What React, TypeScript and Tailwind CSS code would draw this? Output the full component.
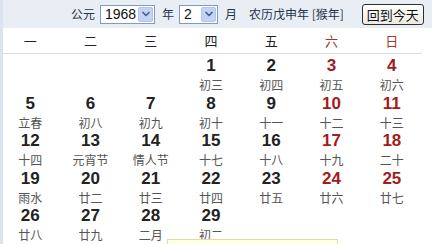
import { ChevronDown } from 'lucide-react'

type Day = { d: number; lunar: string }

const weekdays = ['一', '二', '三', '四', '五', '六', '日']

const days: (Day | null)[] = [
  null, null, null,
  { d: 1, lunar: '初三' }, { d: 2, lunar: '初四' }, { d: 3, lunar: '初五' }, { d: 4, lunar: '初六' },
  { d: 5, lunar: '立春' }, { d: 6, lunar: '初八' }, { d: 7, lunar: '初九' }, { d: 8, lunar: '初十' },
  { d: 9, lunar: '十一' }, { d: 10, lunar: '十二' }, { d: 11, lunar: '十三' },
  { d: 12, lunar: '十四' }, { d: 13, lunar: '元宵节' }, { d: 14, lunar: '情人节' }, { d: 15, lunar: '十七' },
  { d: 16, lunar: '十八' }, { d: 17, lunar: '十九' }, { d: 18, lunar: '二十' },
  { d: 19, lunar: '雨水' }, { d: 20, lunar: '廿二' }, { d: 21, lunar: '廿三' }, { d: 22, lunar: '廿四' },
  { d: 23, lunar: '廿五' }, { d: 24, lunar: '廿六' }, { d: 25, lunar: '廿七' },
  { d: 26, lunar: '廿八' }, { d: 27, lunar: '廿九' }, { d: 28, lunar: '二月' }, { d: 29, lunar: '初二' },
]

function FakeSelect({ value, width }: { value: string; width: string }) {
  return (
    <div className={`flex shrink-0 items-center h-[19px] border border-[#7f9db9] bg-white ${width}`}>
      <span className="flex-1 pl-[4px] text-[14px] leading-none text-[#111] font-['Liberation_Sans',Arial,sans-serif]">{value}</span>
      <span className="flex items-center justify-center w-[15px] h-[15px] mr-[1px] rounded-[2px] bg-[#c3d3f5] border border-[#b0c4ee]">
        <ChevronDown className="w-[12px] h-[12px] text-[#4d6185]" strokeWidth={3.5} />
      </span>
    </div>
  )
}

export default function App() {
  return (
    <div className="w-[432px] h-[244px] overflow-hidden bg-white relative font-['Noto_Sans_CJK_SC',sans-serif]">
      {/* toolbar */}
      <div className="h-[28px] bg-[#e9eef5] flex items-center whitespace-nowrap pl-[71px] text-[12px] text-[#25344d]">
        <span className="shrink-0">公元</span>
        <div className="ml-[5px] shrink-0">
          <FakeSelect value="1968" width="w-[55px]" />
        </div>
        <span className="ml-[7px] shrink-0">年</span>
        <div className="ml-[5px] shrink-0">
          <FakeSelect value="2" width="w-[39px]" />
        </div>
        <span className="ml-[7px] shrink-0">月</span>
        <span className="ml-[12px] shrink-0">农历戊申年 [猴年]</span>
        <button className="ml-[18px] shrink-0 h-[21px] px-[4px] border border-[#2f2f2f] rounded-[3px] bg-gradient-to-b from-white to-[#eceae2] text-[13px] leading-none text-[#111]">
          回到今天
        </button>
      </div>

      {/* weekday header */}
      <div className="grid grid-cols-7 w-[422px] h-[26px] border-b border-[#dcdcdc] items-center text-[13px]">
        {weekdays.map((w, i) => (
          <div key={w} className={`text-center ${i >= 5 ? 'text-[#9b3b2a]' : 'text-[#222]'}`}>
            {w}
          </div>
        ))}
      </div>

      {/* days */}
      <div className="grid grid-cols-7 w-[422px] auto-rows-[37.6px] pt-[1px]">
        {days.map((day, i) => {
          const weekend = i % 7 >= 5
          return (
            <div key={i} className="flex flex-col items-center">
              {day && (
                <>
                  <span
                    className={`h-[21px] leading-[21px] text-[17px] font-bold font-['Liberation_Sans',Arial,sans-serif] ${
                      weekend ? 'text-[#a31b1b]' : 'text-[#222]'
                    }`}
                  >
                    {day.d}
                  </span>
                  <span className="h-[17px] leading-[17px] text-[12px] text-[#555]">{day.lunar}</span>
                </>
              )}
            </div>
          )
        })}
      </div>

      {/* left frame edge */}
      <div className="absolute left-0 top-0 w-[3px] h-full bg-[#dbe3ef]" />

      {/* hover tooltip peeking in at the bottom */}
      <div className="absolute left-[167px] top-[239px] w-[171px] h-[20px] bg-[#ffffe6] border border-[#e2dca8]" />
    </div>
  )
}
